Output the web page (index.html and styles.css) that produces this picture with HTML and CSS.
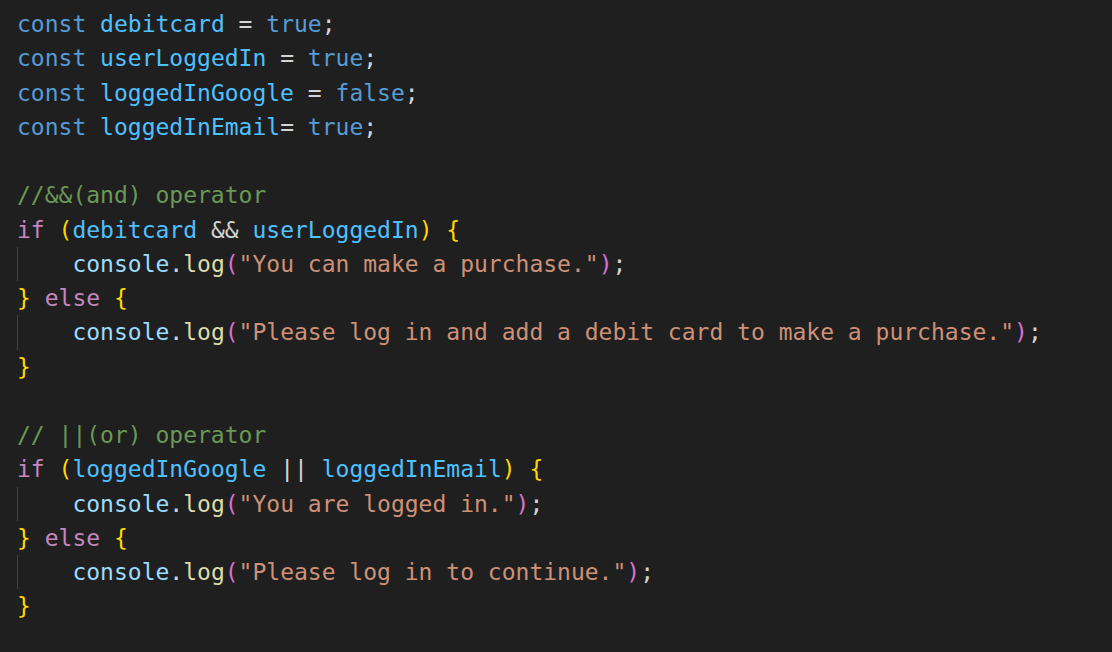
FILE: index.html
```html
<!DOCTYPE html>
<html lang="en">
<head>
<meta charset="utf-8">
<title>Code</title>
<link rel="stylesheet" href="styles.css">
</head>
<body>
<div class="editor">
<div class="line"><span class="kw">const</span> <span class="cv">debitcard</span> <span class="op">=</span> <span class="kw">true</span><span class="op">;</span></div>
<div class="line"><span class="kw">const</span> <span class="cv">userLoggedIn</span> <span class="op">=</span> <span class="kw">true</span><span class="op">;</span></div>
<div class="line"><span class="kw">const</span> <span class="cv">loggedInGoogle</span> <span class="op">=</span> <span class="kw">false</span><span class="op">;</span></div>
<div class="line"><span class="kw">const</span> <span class="cv">loggedInEmail</span><span class="op">=</span> <span class="kw">true</span><span class="op">;</span></div>
<div class="line"> </div>
<div class="line"><span class="cm">//&amp;&amp;(and) operator</span></div>
<div class="line"><span class="ctl">if</span> <span class="b1">(</span><span class="cv">debitcard</span> <span class="op">&amp;&amp;</span> <span class="cv">userLoggedIn</span><span class="b1">)</span> <span class="b1">{</span></div>
<div class="line indented">    <span class="var">console</span><span class="op">.</span><span class="fn">log</span><span class="b2">(</span><span class="str">"You can make a purchase."</span><span class="b2">)</span><span class="op">;</span></div>
<div class="line"><span class="b1">}</span> <span class="ctl">else</span> <span class="b1">{</span></div>
<div class="line indented">    <span class="var">console</span><span class="op">.</span><span class="fn">log</span><span class="b2">(</span><span class="str">"Please log in and add a debit card to make a purchase."</span><span class="b2">)</span><span class="op">;</span></div>
<div class="line"><span class="b1">}</span></div>
<div class="line"> </div>
<div class="line"><span class="cm">// ||(or) operator</span></div>
<div class="line"><span class="ctl">if</span> <span class="b1">(</span><span class="cv">loggedInGoogle</span> <span class="op">||</span> <span class="cv">loggedInEmail</span><span class="b1">)</span> <span class="b1">{</span></div>
<div class="line indented">    <span class="var">console</span><span class="op">.</span><span class="fn">log</span><span class="b2">(</span><span class="str">"You are logged in."</span><span class="b2">)</span><span class="op">;</span></div>
<div class="line"><span class="b1">}</span> <span class="ctl">else</span> <span class="b1">{</span></div>
<div class="line indented">    <span class="var">console</span><span class="op">.</span><span class="fn">log</span><span class="b2">(</span><span class="str">"Please log in to continue."</span><span class="b2">)</span><span class="op">;</span></div>
<div class="line"><span class="b1">}</span></div>
</div>
</body>
</html>
```

FILE: styles.css
```css
html, body {
  margin: 0;
  padding: 0;
  background: #1f1f1f;
  height: 100%;
  overflow: hidden;
}

.editor {
  padding: 7px 0 0 17px;
  font-family: "DejaVu Sans Mono", "Liberation Mono", monospace;
  font-size: 23px;
  line-height: 34.25px;
  color: #d4d4d4;
}

.line {
  display: block;
  height: 34.25px;
  white-space: pre;
}

.indented {
  background: linear-gradient(#404040, #404040) no-repeat 0 0 / 1px 100%;
}

.kw { color: #569cd6; }
.cv { color: #4fc1ff; }
.var { color: #9cdcfe; }
.fn { color: #dcdcaa; }
.str { color: #ce9178; }
.cm { color: #6a9955; }
.ctl { color: #c586c0; }
.op { color: #d4d4d4; }
.b1 { color: #ffd700; }
.b2 { color: #da70d6; }
```
